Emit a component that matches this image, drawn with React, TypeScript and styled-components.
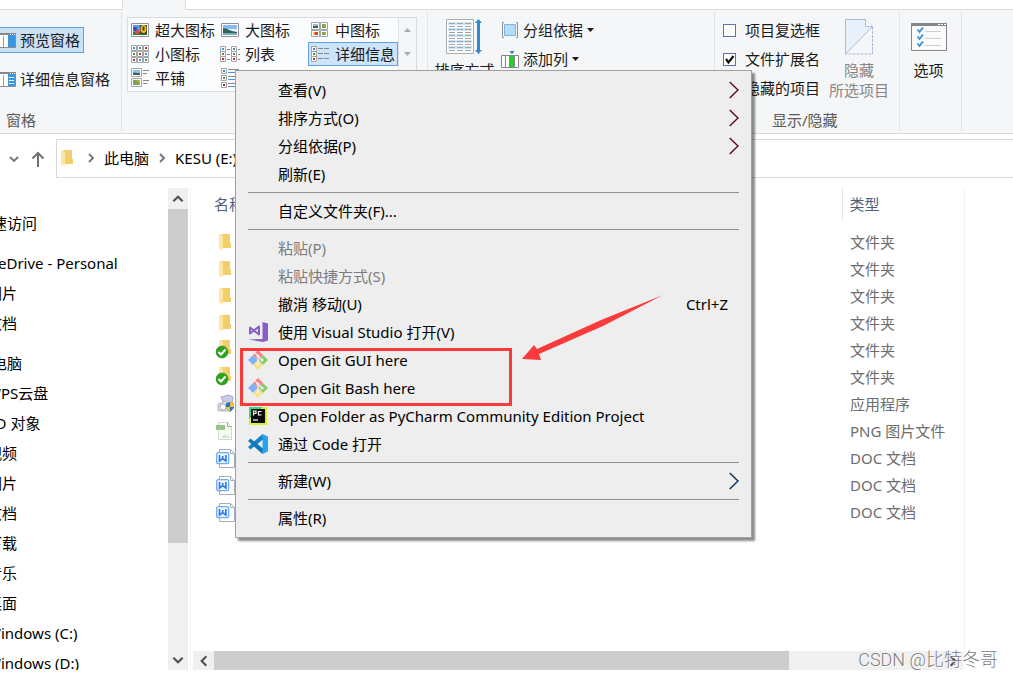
import React from "react";
import styled, { createGlobalStyle } from "styled-components";

const Global = createGlobalStyle`
  * { box-sizing: border-box; }
  body { margin: 0; background: #fff; }
  body, button, table {
    font: 15px/20px "Noto Sans", "Noto Sans CJK SC", sans-serif;
    color: #1a1a1a;
  }
  button { border: 0; padding: 0; background: none; text-align: left; white-space: nowrap; }
  svg { display: block; flex: none; }
`;

const Window = styled.div`
  position: relative;
  display: flex;
  flex-direction: column;
  height: 100vh;
  min-height: 560px;
  overflow: hidden;
`;

/* ---------- ribbon ---------- */

const TabStrip = styled.div`
  display: flex;
  flex: none;
  height: 10px;
`;
const TabGap = styled.div<{ $width?: number }>`
  flex: ${(p) => (p.$width ? `0 0 ${p.$width}px` : "1")};
  border-bottom: 1px solid #dadbdc;
`;
const ActiveTab = styled.div`
  width: 64px;
  background: #f5f6f7;
  border: solid #dadbdc;
  border-width: 0 1px;
`;
const Ribbon = styled.div`
  display: flex;
  flex: none;
  height: 124px;
  padding: 2px 0;
  background: #f5f6f7;
  border-bottom: 1px solid #dadbdc;
`;
const Group = styled.section<{ $width: number }>`
  display: flex;
  flex-direction: column;
  flex: none;
  width: ${(p) => p.$width}px;
  border-right: 1px solid #e2e3e4;
`;
const GroupBody = styled.div`
  display: flex;
  flex: 1;
`;
const GroupTitle = styled.div<{ $indent?: number }>`
  padding: 0 0 1px ${(p) => p.$indent ?? 0}px;
  color: #5a5a5a;
`;
const PaneButtons = styled.div`
  display: flex;
  flex-direction: column;
  align-items: flex-start;
  gap: 13px;
  padding-top: 15px;
  margin-left: -9px;
`;
const PaneButton = styled.button<{ $on?: boolean }>`
  display: flex;
  align-items: center;
  gap: 4px;
  height: 26px;
  padding: 0 3px 0 4px;
  border: 1px solid ${(p) => (p.$on ? "#62a2e4" : "transparent")};
  background: ${(p) => (p.$on ? "#c9e0f7" : "transparent")};
`;
const Gallery = styled.div`
  display: flex;
  height: 75px;
  margin: 5px 0 0 5px;
  border: 1px solid #dadbdc;
  background: #fbfcfe;
`;
const GalleryGrid = styled.div`
  display: grid;
  grid-template-columns: repeat(3, 90px);
  grid-auto-rows: 24px;
`;
const GalleryItem = styled.button<{ $on?: boolean }>`
  display: flex;
  align-items: center;
  gap: 5px;
  padding-left: 2px;
  background: ${(p) => (p.$on ? "#cce4fc" : "transparent")};
  box-shadow: ${(p) => (p.$on ? "inset 0 0 0 1px #62a2e4" : "none")};
`;
const GallerySteps = styled.div`
  display: flex;
  flex-direction: column;
  width: 18px;
  border-left: 1px solid #e2e3e4;
  background: #f5f6f7;
`;
const Step = styled.button`
  display: flex;
  align-items: center;
  justify-content: center;
  height: 24px;
`;
const TallButton = styled.button<{ $width: number; $muted?: boolean }>`
  display: flex;
  flex-direction: column;
  align-items: center;
  width: ${(p) => p.$width}px;
  gap: 5px;
  padding-top: 5px;
  text-align: center;
  color: ${(p) => (p.$muted ? "#858585" : "#1a1a1a")};
`;
const SmallStack = styled.div`
  display: flex;
  flex-direction: column;
  gap: 9px;
  padding-top: 8px;
`;
const SmallButton = styled.button`
  display: flex;
  align-items: center;
  gap: 4px;
`;
const OptionStack = styled(SmallStack)`
  width: 105px;
  padding-left: 8px;
`;
const CheckRow = styled.label`
  display: flex;
  align-items: center;
  gap: 9px;
  height: 20px;
  white-space: nowrap;
`;
const Check = styled.input`
  appearance: none;
  width: 13px;
  height: 13px;
  margin: 0;
  border: 1px solid #5b76a6;
  background: #fff;
`;
const CheckBox = styled.span`
  display: grid;
  > * { grid-area: 1 / 1; }
  > svg { z-index: 1; visibility: hidden; pointer-events: none; }
  > input:checked + svg { visibility: visible; }
`;

/* ---------- address ---------- */

const AddressRow = styled.div`
  display: flex;
  align-items: center;
  flex: none;
  height: 49px;
  padding-left: 8px;
`;
const IconButton = styled.button`
  display: flex;
  margin-right: 11px;
`;
const AddressBar = styled.nav`
  display: flex;
  align-items: center;
  flex: 1;
  gap: 7px;
  height: 39px;
  padding: 0 0 1px 1px;
  border: 1px solid #d9d9d9;
  border-right: 0;
  color: #000;
`;
const Crumb = styled.a`
  color: inherit;
  text-decoration: none;
  white-space: nowrap;
`;

/* ---------- body ---------- */

const Body = styled.div`
  display: flex;
  flex: 1;
  min-height: 0;
  padding: 5px 0 8px;
`;
const Sidebar = styled.nav`
  flex: 0 0 168px;
  overflow: hidden;
  padding-top: 20px;
`;
const TreeGroup = styled.ul`
  display: flex;
  flex-direction: column;
  margin: 0 0 10px -23px;
  padding: 0;
  list-style: none;
`;
const TreeItem = styled.li<{ $child?: boolean }>`
  height: 30px;
  padding-left: ${(p) => (p.$child ? 10 : 0)}px;
  line-height: 30px;
  white-space: nowrap;
  color: #000;
`;
const ScrollColumn = styled.div`
  display: flex;
  flex-direction: column;
  flex: none;
  width: 20px;
  background: #f0f0f0;
`;
const ScrollRow = styled.div`
  display: flex;
  flex: none;
  height: 19px;
  margin: 0 1px 0 2px;
  background: #f0f0f0;
`;
const ScrollButton = styled.button`
  display: flex;
  align-items: center;
  justify-content: center;
  flex: 0 0 21px;
`;
const Track = styled.div`
  display: flex;
  flex-direction: inherit;
  flex: 1;
`;
const Thumb = styled.div<{ $share: number }>`
  flex: 0 0 ${(p) => p.$share}%;
  background: #cdcdcd;
`;
const Files = styled.main`
  display: flex;
  flex-direction: column;
  flex: 1;
  min-width: 0;
  margin-left: 2px;
  border: solid #f3f3f3;
  border-width: 0 1px;
`;
const FileArea = styled.div`
  flex: 1;
  min-height: 0;
  overflow: hidden;
`;
const FileTable = styled.table`
  width: 100%;
  border-collapse: collapse;
  table-layout: fixed;
`;
const HeadCell = styled.th<{ $last?: boolean }>`
  width: ${(p) => (p.$last ? "122px" : "auto")};
  height: 32px;
  padding: 0 0 0 ${(p) => (p.$last ? 7 : 23)}px;
  border-left: ${(p) => (p.$last ? "1px solid #e5e5e5" : "0")};
  font-weight: 400;
  text-align: left;
  color: #4c607a;
`;
const Cell = styled.td<{ $last?: boolean }>`
  height: 27px;
  padding: 0 0 0 ${(p) => (p.$last ? 8 : 25)}px;
  white-space: nowrap;
  color: #6d6d6d;
`;
const Spacer = styled.tbody`
  td { height: 8px; padding: 0; }
`;
const PreviewPane = styled.aside`
  flex: 0 0 48px;
`;

/* ---------- overlays ---------- */

const Menu = styled.div`
  position: absolute;
  top: 70px;
  left: 235px;
  width: 517px;
  padding: 5px 0;
  border: 1px solid #a0a0a0;
  background: #eee;
  box-shadow: 3px 3px 2px rgba(0, 0, 0, 0.45);
`;
const MenuItem = styled.button<{ $disabled?: boolean }>`
  display: flex;
  align-items: center;
  width: 100%;
  height: 28px;
  padding: 0 12px;
  color: ${(p) => (p.$disabled ? "#7c7c7c" : "#000")};
`;
const MenuIcon = styled.span`
  flex: 0 0 30px;
`;
const MenuLabel = styled.span`
  flex: 1;
`;
const Shortcut = styled.span`
  padding-right: 11px;
`;
const Divider = styled.hr`
  width: auto;
  height: 1px;
  margin: 4px 12px;
  border: 0;
  background: #919191;
`;
const Highlight = styled.div`
  position: absolute;
  top: 348px;
  left: 240px;
  width: 272px;
  height: 58px;
  border: 3px solid #fb3b3b;
  pointer-events: none;
`;
const Arrow = styled.svg`
  position: absolute;
  top: 294px;
  left: 521px;
  pointer-events: none;
`;
const Watermark = styled.div`
  position: absolute;
  right: 15px;
  bottom: 6px;
  font: 300 18px/24px Roboto, "Noto Sans CJK SC", sans-serif;
  color: #808080;
  text-shadow: 1px 1px 0 #fff;
`;

/* ---------- icons ---------- */

type Dir = "up" | "down" | "left" | "right";
const turn = { right: 0, down: 90, left: 180, up: 270 };
const Chevron = ({ dir, size = 12, color = "#505050" }: { dir: Dir; size?: number; color?: string }) => (
  <svg width={size} height={size} viewBox="0 0 12 12" fill="none" stroke={color} strokeWidth="1.800">
    <path d="M4 2 8 6 4 10" transform={`rotate(${turn[dir]} 6 6)`} />
  </svg>
);
const SubArrow = ({ color }: { color: string }) => (
  <svg width="10" height="18" fill="none" stroke={color} strokeWidth="1.400"><path d="M.7 1 9 9 .7 17" /></svg>
);
const Caret = ({ color = "#1a1a1a", up = false }) => (
  <svg width="7" height="4"><path d={up ? "M0 4 3.500 0 7 4z" : "M0 0h7L3.500 4z"} fill={color} /></svg>
);
const PaneIcon = ({ lines = false }) => (
  <svg width="20" height="15" viewBox="0 0 20 15">
    <path d="M.5.5h19v14H.5z" fill="#fff" stroke="#8a8c8e" />
    <path d="M0 0h20v2H0z" fill="#85878a" />
    <path d="M14 1h1v1h-1zM16 1h1v1h-1zM18 1h1v1h-1z" fill="#fff" />
    <path d="M7.500 3v11" stroke="#9a9c9e" />
    <path d="M12 2h7v12h-7z" fill="#3b97dd" />
    {lines && <path d="M13 5.500h5M13 8.500h5M13 11.500h5" stroke="#fff" />}
  </svg>
);
const Thumbnail = ({ x, y, w, h, kind }: { x: number; y: number; w: number; h: number; kind: number }) => (
  <g transform={`translate(${x} ${y})`}>
    <path d={`M.5.5h${w - 1}v${h - 1}h${1 - w}z`} fill="#fff" stroke="#a3a5a8" />
    {kind === 0 && (
      <>
        <path d={`M2 2h${w - 4}v${h - 4}h${4 - w}z`} fill="#8fbdf0" />
        <path d={`M2 ${h * 0.5}L${w * 0.6} ${h - 4}H${w - 2}V${h - 2}H2z`} fill="#2f6656" />
      </>
    )}
    {kind === 1 && (
      <>
        <path d={`M2 2h${w - 4}v${h - 4}h${4 - w}z`} fill="#79a653" />
        <path d={`M${w / 2} 2h${w / 2 - 2}v${h / 2}z`} fill="#e0a52c" />
      </>
    )}
    {kind === 2 && (
      <>
        <path d={`M2 2h${w - 4}v${h - 4}h${4 - w}z`} fill="#d3402b" />
        <path d={`M2 2h2v${h - 4}h-2z`} fill="#f3b740" />
      </>
    )}
  </g>
);
const Bits = ({ x, y, kind }: { x: number; y: number; kind: number }) => (
  <>
    <path d={`M${x + 0.5} ${y + 0.5}h5v5h-5z`} fill="#fff" stroke="#a3a5a8" />
    <path d={`M${x + 2} ${y + 2}h2v2h-2z`} fill={["#3f8fd8", "#55904c", "#c62d23"][kind]} />
  </>
);
const Icon = ({ name }: { name: string }) => (
  <svg width="20" height="20" viewBox="0 0 20 20">
    {name === "xl" && (
      <>
        <path d="M1.500 3.500h17v13h-17z" fill="#fff" stroke="#8f9194" />
        <path d="M3 5h14v10H3z" fill="#4f9df0" />
        <path d="M3 12h14v3H3z" fill="#2e7a3a" />
        <path d="M10 5h7v9h-7z" fill="#3a4a1c" />
        <ellipse cx="13.500" cy="9" rx="3" ry="4" fill="#f5bd1f" />
        <path d="M12.500 6.500h2v4h-2z" fill="#52330d" />
        <circle cx="5" cy="9" r="2" fill="#4140a8" /><circle cx="7" cy="12" r="2.200" fill="#e04a3a" />
      </>
    )}
    {name === "large" && (
      <>
        <path d="M1.500 3.500h17v13h-17z" fill="#fff" stroke="#8f9194" />
        <path d="M3 5h14v6H3z" fill="#86b9f1" /><path d="M8 9h9v3H8z" fill="#e9f3fb" />
        <path d="M3 8c4 0 6 3 14 4v3H3z" fill="#2f6656" /><path d="M3 13h14v2H3z" fill="#7da9bd" />
      </>
    )}
    {name === "medium" && (
      <>
        <Thumbnail x={1} y={2} w={9} h={8} kind={0} /><Thumbnail x={10} y={2} w={8} h={8} kind={1} />
        <Thumbnail x={1} y={10} w={9} h={7} kind={2} /><Thumbnail x={10} y={10} w={8} h={7} kind={1} />
      </>
    )}
    {name === "small" &&
      [0, 1, 2].map((r) => [0, 1, 2].map((c) => <Bits key={`${r}${c}`} x={1 + c * 6} y={1 + r * 6} kind={(r + c) % 3} />))}
    {name === "list" && (
      <>
        {[0, 1, 2].map((r) => [0, 1].map((c) => <Bits key={`${r}${c}`} x={c * 11} y={2 + r * 5} kind={r} />))}
        <path d="M7 5.500h3M7 10.500h3M7 15.500h3M18 5.500h2M18 10.500h2M18 15.500h2" stroke="#85878a" />
      </>
    )}
    {name === "details" && (
      <>
        {[0, 1, 2].map((r) => <Bits key={r} x={1} y={2 + r * 5} kind={r} />)}
        <path d="M8 4.500h5M14 4.500h5M8 9.500h5M14 9.500h5M8 14.500h5M14 14.500h5" stroke="#85878a" />
      </>
    )}
    {name === "tiles" && (
      <>
        <Thumbnail x={1} y={0} w={11} h={9} kind={0} /><Thumbnail x={1} y={10} w={11} h={9} kind={1} />
        <path d="M13 2.500h6M13 5.500h4M13 12.500h6M13 15.500h4" stroke="#85878a" />
      </>
    )}
    {name === "content" && (
      <>
        {[0, 1, 2].map((r) => <Bits key={r} x={1} y={r * 7} kind={r} />)}
        <path d="M8 1.500h11M8 8.500h11M8 15.500h11" stroke="#85878a" />
        <path d="M8 4.500h11M8 11.500h11M8 18.500h11" stroke="#4a94e6" />
      </>
    )}
  </svg>
);
const SortIcon = () => (
  <svg width="38" height="38" viewBox="1 0 38 38">
    <path d="M1.500 2.500h27v34h-27z" fill="#fff" stroke="#a9abad" />
    {[0, 1, 2, 3, 4].map((i) => <path key={i} d={`M3 ${5 + i * 6}h24v3H3z`} fill="#cbe7f5" />)}
    {[0, 1, 2, 3, 4, 5, 6, 7, 8, 9].map((i) => (
      <path key={i} d={`M4 ${6.5 + i * 3}h6M12 ${6.5 + i * 3}h6M20 ${6.5 + i * 3}h6`} stroke="#a4a6a8" />
    ))}
    <path d="M33.500 2 37 6h-2v27h2l-3.500 4-3.500-4h2V6h-2z" fill="#2f8ad6" />
  </svg>
);
const GroupIcon = () => (
  <svg width="18" height="18" viewBox="0 0 18 18" fill="none">
    <path d="M3 1.500H1.500v15H3M15 1.500h1.500v15H15" stroke="#8f9194" />
    <path d="M3.500 3.500h11v11h-11z" fill="#b4dcfb" stroke="#7bb5e6" />
  </svg>
);
const ColumnIcon = () => (
  <svg width="18" height="18" viewBox="0 0 18 18">
    <path d="M.5 5.500h17v12H.5z" fill="#fff" stroke="#85878a" />
    <path d="M4.500 5v12M8.500 5v12M13.500 5v12" stroke="#85878a" />
    <path d="M9 6h4v11H9z" fill="#22d02c" />
    <path d="M9 1h4v1l-2 2-2-2z" fill="#2f7fc6" />
  </svg>
);
const HideIcon = () => (
  <svg width="30" height="38" viewBox="0 0 30 38" fill="none">
    <path d="M1.500 2.500h20l7 7L1.500 37z" fill="#e8f0fc" stroke="#a9bcd8" />
    <path d="M21.500 2.500v7h7" fill="#fff" stroke="#a9bcd8" />
    <path d="M28.500 10v27h-27" stroke="#a9bcd8" strokeDasharray="3 1" />
  </svg>
);
const OptionsIcon = () => (
  <svg width="36" height="38" viewBox="0 0 36 38">
    <path d="M.5 6.500h35v27H.5z" fill="#fbfbfb" stroke="#85878a" />
    <path d="M0 6h36v3H0z" fill="#85878a" />
    <path d="M27 7h2v1h-2zM30 7h2v1h-2zM33 7h2v1h-2z" fill="#fff" />
    {[14, 21, 28].map((y) => (
      <g key={y} fill="none">
        <path d={`M14 ${y + 0.5}h16`} stroke="#cfcfcf" />
        <path d={`M6.500 ${y - 1.5}l2 2.500 3.500-4.500`} stroke="#3b97dd" strokeWidth="2" />
      </g>
    ))}
  </svg>
);
const UpArrow = () => (
  <svg width="14" height="16" viewBox="0 0 14 16" fill="none" stroke="#737373" strokeWidth="2">
    <path d="M7 16V2M1.500 7.500 7 2l5.500 5.500" />
  </svg>
);
const FolderShape = () => (
  <>
    <path d="M5 2h9v9h1v5H5z" fill="#f2cf6b" />
    <path d="M3 2l4 1.500V18l-4-1.500z" fill="#ffe7a2" />
  </>
);
const FileIcon = ({ kind }: { kind: string }) => (
  <svg width="20" height="20" viewBox="0 0 20 20">
    {kind === "folder" && <FolderShape />}
    {kind === "synced" && (
      <>
        <g transform="translate(0 -2)"><FolderShape /></g>
        <circle cx="6" cy="12" r="6" fill="#2ea31d" stroke="#1f8216" strokeWidth=".6" />
        <path d="M2.500 12 5 14.500l4.500-5" stroke="#fff" strokeWidth="2" fill="none" />
      </>
    )}
    {kind === "app" && (
      <>
        <path d="M5 3l8-2 4 2-1 6-9-1z" fill="#c9cdea" stroke="#8a8fb5" strokeWidth=".7" />
        <path d="M2 10l8-3 5 3v7H2z" fill="#dfe2e8" stroke="#9a9fae" strokeWidth=".7" />
        <circle cx="7" cy="13" r="3" fill="#fff" stroke="#a7abb6" />
        <path d="M10 9l4-1 4 1v5l-4 4-4-4z" fill="#2a72c8" />
        <path d="M14 8l4 1v4h-4zM10 13h4v5l-4-4z" fill="#f6c02c" />
      </>
    )}
    {kind === "png" && (
      <>
        <path d="M2.500 1.500h9l4 4v13h-13z" fill="#f8fcf7" stroke="#c8dfc1" />
        <path d="M11.500 1.500v4h4" fill="none" stroke="#8bb582" />
        <path d="M0 4h9v5H0z" fill="#94c68b" />
        <path d="M5 17l3-4 3 2 1-1 2 3z" fill="#d4e9cf" />
      </>
    )}
    {kind === "doc" && (
      <>
        <path d="M3.500 1.500h11l4 4v14h-15z" fill="#fff" stroke="#a9aeb8" />
        <path d="M14.500 1.500v4h4" fill="none" stroke="#a9aeb8" />
        <rect x=".7" y="4.700" width="12" height="11" rx="1.500" fill="#eef6ff" stroke="#6cabf8" strokeWidth="1.300" />
        <path d="M3.500 7v6l3.200-2.500L9.900 13V7M6.700 8v3" fill="none" stroke="#2878ee" strokeWidth="1.600" />
      </>
    )}
  </svg>
);
const MenuGlyph = ({ kind }: { kind: string }) => (
  <svg width="20" height="20" viewBox="0 0 20 20">
    {kind === "vs" && (
      <>
        <path d="M14.500 0 20 1.500v17L15 20 0 17.500l14.500-.5z" fill="#865fc5" />
        <path d="M2 5.500v6l4-3 5 4V4.500l-5 4z" fill="none" stroke="#865fc5" strokeWidth="2" strokeLinejoin="round" />
      </>
    )}
    {kind === "git" && (
      <>
        <path d="M10 0l5 5-5 5-5-5z" fill="#fb7f7f" /><path d="M15 5l5 5-5 5-5-5z" fill="#85cf63" />
        <path d="M5 5l5 5-5 5-5-5z" fill="#80b2fb" /><path d="M10 10l5 5-5 5-5-5z" fill="#fbe084" />
        <path d="M7 3l3 3v8M10 6l4 4" fill="none" stroke="#eee" strokeWidth="1.300" />
        <circle cx="10" cy="6" r="1.600" fill="#eee" /><circle cx="10" cy="14" r="1.600" fill="#eee" /><circle cx="14" cy="10" r="1.600" fill="#eee" />
      </>
    )}
    {kind === "pycharm" && (
      <>
        <path d="M1 1h18v18H1z" fill="#d9ee35" /><path d="M1 1h14L1 13z" fill="#32d689" />
        <path d="M3 3h14v14H3z" fill="#0a0a0a" />
        <path d="M5.500 9.500V5H8v2.500H5.500M13.500 5.500H10.500v3.500h3" fill="none" stroke="#fff" strokeWidth="1.200" />
        <path d="M5 14h5" stroke="#fff" strokeWidth="1.200" />
      </>
    )}
    {kind === "code" && (
      <>
        <path d="M14.500 0 20 2.500v15L14.500 20z" fill="#27a5ee" />
        <path d="M14.500 0 0 13l2.500 2.500L15 5.500z" fill="#1285cb" />
        <path d="M14.500 20 0 7l2.500-2.500L15 14.500z" fill="#0f76ba" />
      </>
    )}
  </svg>
);

/* ---------- data ---------- */

const views = [
  ["xl", "超大图标"], ["large", "大图标"], ["medium", "中图标"],
  ["small", "小图标"], ["list", "列表"], ["details", "详细信息"],
  ["tiles", "平铺"], ["content", ""],
];
const tree = [
  ["快速访问"],
  ["OneDrive - Personal", "图片", "文档"],
  ["此电脑", "WPS云盘", "3D 对象", "视频", "图片", "文档", "下载", "音乐", "桌面", "Windows (C:)", "Windows (D:)"],
];
const files = [
  ["folder", "文件夹"], ["folder", "文件夹"], ["folder", "文件夹"], ["folder", "文件夹"],
  ["synced", "文件夹"], ["synced", "文件夹"], ["app", "应用程序"], ["png", "PNG 图片文件"],
  ["doc", "DOC 文档"], ["doc", "DOC 文档"], ["doc", "DOC 文档"],
];
type Entry = { label: string; icon?: string; sub?: string; keys?: string; disabled?: boolean };
const menu: Entry[][] = [
  [
    { label: "查看(V)", sub: "#5c0a14" }, { label: "排序方式(O)", sub: "#5c0a14" },
    { label: "分组依据(P)", sub: "#5c0a14" }, { label: "刷新(E)" },
  ],
  [{ label: "自定义文件夹(F)..." }],
  [
    { label: "粘贴(P)", disabled: true }, { label: "粘贴快捷方式(S)", disabled: true },
    { label: "撤消 移动(U)", keys: "Ctrl+Z" },
    { label: "使用 Visual Studio 打开(V)", icon: "vs" },
    { label: "Open Git GUI here", icon: "git" }, { label: "Open Git Bash here", icon: "git" },
    { label: "Open Folder as PyCharm Community Edition Project", icon: "pycharm" },
    { label: "通过 Code 打开", icon: "code" },
  ],
  [{ label: "新建(W)", sub: "#0a2f5c" }],
  [{ label: "属性(R)" }],
];

const Option = ({ label, on }: { label: string; on?: boolean }) => (
  <CheckRow>
    <CheckBox>
      <Check type="checkbox" defaultChecked={on} />
      <svg width="13" height="13" viewBox="0 0 13 13" fill="none" stroke="#111" strokeWidth="2.200">
        <path d="M3 6l2.500 3.500L10.500 3" />
      </svg>
    </CheckBox>
    {label}
  </CheckRow>
);

export default function App() {
  return (
    <Window>
      <Global />
      <TabStrip><TabGap $width={122} /><ActiveTab /><TabGap /></TabStrip>
      <Ribbon>
        <Group $width={122}>
          <GroupBody>
            <PaneButtons>
              <PaneButton $on><PaneIcon />预览窗格</PaneButton>
              <PaneButton><PaneIcon lines />详细信息窗格</PaneButton>
            </PaneButtons>
          </GroupBody>
          <GroupTitle $indent={6}>窗格</GroupTitle>
        </Group>
        <Group $width={306}>
          <GroupBody>
            <Gallery>
              <GalleryGrid>
                {views.map(([icon, label]) => (
                  <GalleryItem key={icon} $on={icon === "details"}><Icon name={icon} />{label}</GalleryItem>
                ))}
              </GalleryGrid>
              <GallerySteps>
                <Step aria-label="上一行"><Caret up color="#a3adb8" /></Step>
                <Step aria-label="下一行"><Caret color="#a3adb8" /></Step>
              </GallerySteps>
            </Gallery>
          </GroupBody>
        </Group>
        <Group $width={287}>
          <GroupBody>
            <TallButton $width={73}><SortIcon />排序方式</TallButton>
            <SmallStack>
              <SmallButton><GroupIcon />分组依据<Caret /></SmallButton>
              <SmallButton><ColumnIcon />添加列<Caret /></SmallButton>
            </SmallStack>
          </GroupBody>
        </Group>
        <Group $width={185}>
          <GroupBody>
            <OptionStack>
              <Option label="项目复选框" />
              <Option label="文件扩展名" on />
              <Option label="隐藏的项目" />
            </OptionStack>
            <TallButton $width={78} $muted><HideIcon /><span>隐藏<br />所选项目</span></TallButton>
          </GroupBody>
          <GroupTitle $indent={57}>显示/隐藏</GroupTitle>
        </Group>
        <Group $width={62}>
          <GroupBody><TallButton $width={57}><OptionsIcon />选项</TallButton></GroupBody>
        </Group>
      </Ribbon>

      <AddressRow>
        <IconButton aria-label="最近位置"><Chevron dir="down" color="#737373" /></IconButton>
        <IconButton aria-label="上移"><UpArrow /></IconButton>
        <AddressBar>
          <FileIcon kind="folder" />
          <Chevron dir="right" color="#737373" />
          <Crumb href="#pc">此电脑</Crumb>
          <Chevron dir="right" color="#737373" />
          <Crumb href="#e">KESU (E:)</Crumb>
        </AddressBar>
      </AddressRow>

      <Body>
        <Sidebar>
          {tree.map((group, g) => (
            <TreeGroup key={g}>
              {group.map((label, i) => <TreeItem key={i} $child={i > 0}>{label}</TreeItem>)}
            </TreeGroup>
          ))}
        </Sidebar>
        <ScrollColumn>
          <ScrollButton aria-label="向上滚动"><Chevron dir="up" size={14} /></ScrollButton>
          <Track><Thumb $share={76} /></Track>
          <ScrollButton aria-label="向下滚动"><Chevron dir="down" size={14} /></ScrollButton>
        </ScrollColumn>
        <Files>
          <FileArea>
            <FileTable>
              <thead><tr><HeadCell>名称</HeadCell><HeadCell $last>类型</HeadCell></tr></thead>
              <Spacer><tr><td colSpan={2} /></tr></Spacer>
              <tbody>
                {files.map(([kind, type], i) => (
                  <tr key={i}><Cell><FileIcon kind={kind} /></Cell><Cell $last>{type}</Cell></tr>
                ))}
              </tbody>
            </FileTable>
          </FileArea>
          <ScrollRow>
            <ScrollButton aria-label="向左滚动"><Chevron dir="left" size={14} /></ScrollButton>
            <Track><Thumb $share={79} /></Track>
            <ScrollButton aria-label="向右滚动"><Chevron dir="right" size={14} /></ScrollButton>
          </ScrollRow>
        </Files>
        <PreviewPane />
      </Body>

      <Menu role="menu">
        {menu.map((section, s) => (
          <React.Fragment key={s}>
            {s > 0 && <Divider />}
            {section.map((m) => (
              <MenuItem key={m.label} role="menuitem" $disabled={m.disabled}>
                <MenuIcon>{m.icon && <MenuGlyph kind={m.icon} />}</MenuIcon>
                <MenuLabel>{m.label}</MenuLabel>
                {m.keys && <Shortcut>{m.keys}</Shortcut>}
                {m.sub && <SubArrow color={m.sub} />}
              </MenuItem>
            ))}
          </React.Fragment>
        ))}
      </Menu>
      <Highlight />
      <Arrow width="144" height="68" viewBox="0 0 144 68">
        <path d="M1 65 13 51l3 4L80 26 142 1 82 32 18 60l2 6z" fill="#fb3b3b" />
      </Arrow>
      <Watermark>CSDN @比特冬哥</Watermark>
    </Window>
  );
}
